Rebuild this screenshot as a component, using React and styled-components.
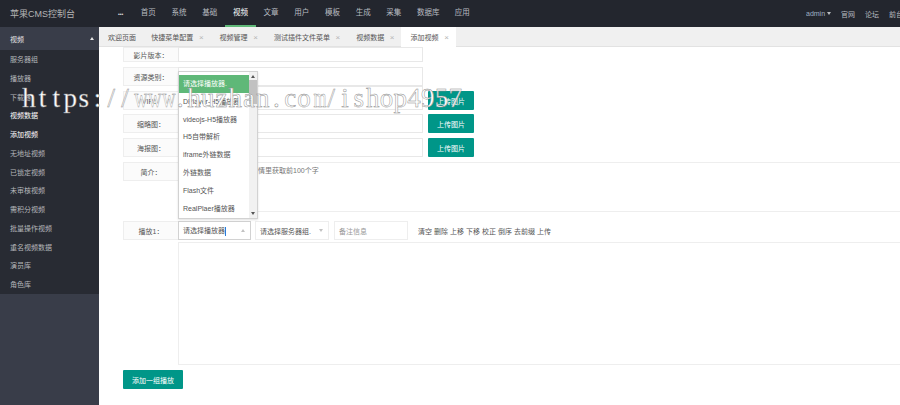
import styled, { createGlobalStyle } from "styled-components";

const GlobalStyle = createGlobalStyle`
  * { box-sizing: border-box; }
  html, body { margin: 0; padding: 0; background: #fff; }
  body { font-family: "Liberation Sans", "Noto Sans CJK SC", sans-serif; font-size: 7px; color: #555; }
`;

const Page = styled.div`
  position: relative;
  width: 900px;
  height: 405px;
  overflow: hidden;
`;

const TopBar = styled.div`
  height: 27px;
  background: #23262e;
  display: flex;
  align-items: center;
`;

const Logo = styled.div`
  width: 111px;
  padding-left: 10px;
  font-size: 9px;
  color: #b4b4b4;
`;

const NavMore = styled.div`
  width: 22px;
  padding-left: 7px;
  color: #ddd;
  font-size: 5px;
  font-weight: 700;
`;

const Nav = styled.div`
  display: flex;
  height: 27px;
`;

const NavItem = styled.div`
  width: ${(p) => p.$w || 30.7}px;
  height: 27px;
  line-height: 26px;
  text-align: center;
  font-size: 7.5px;
  color: ${(p) => (p.$active ? "#fff" : "#b8bcc0")};
  border-bottom: 2px solid ${(p) => (p.$active ? "#5fb878" : "transparent")};
`;

const UserArea = styled.div`
  margin-left: auto;
  display: flex;
  align-items: center;
  gap: 10px;
  width: 94px;
  flex-shrink: 0;
  white-space: nowrap;
  overflow: hidden;
  font-size: 7px;
  color: #b8bcc0;
`;

const AdminName = styled.span`
  color: #9fb0c4;
  display: inline-flex;
  align-items: center;
  gap: 2px;
  width: 25px;
`;

const Caret = styled.i`
  width: 0;
  height: 0;
  border-left: 2.5px solid transparent;
  border-right: 2.5px solid transparent;
  border-top: ${(p) => (p.$up ? "0" : "3px solid " + (p.$color || "#b8bcc0"))};
  border-bottom: ${(p) => (p.$up ? "3px solid " + (p.$color || "#b8bcc0") : "0")};
`;

const Body = styled.div`
  display: flex;
  height: 378px;
`;

const Sidebar = styled.div`
  width: 99px;
  flex-shrink: 0;
  background: #393d49;
`;

const SideHead = styled.div`
  height: 23px;
  padding: 0 5px 0 10px;
  display: flex;
  align-items: center;
  justify-content: space-between;
  color: #e4e4e4;
  font-size: 7px;
`;

const SideList = styled.div`
  background: #282b33;
  height: 244px;
  padding-top: 1px;
`;

const SideItem = styled.div`
  height: 18.75px;
  line-height: 18.75px;
  padding-left: 10px;
  font-size: 7px;
  color: ${(p) => (p.$active ? "#fff" : "#b4b6ba")};
`;

const Main = styled.div`
  flex: 1;
  min-width: 0;
`;

const Tabs = styled.div`
  height: 20px;
  background: #f0f0f0;
  border-bottom: 1px solid #e2e2e2;
  display: flex;
`;

const Tab = styled.div`
  display: flex;
  align-items: center;
  padding: 0 6.3px 0 9px;
  gap: 5px;
  height: 20px;
  font-size: 7px;
  color: #555;
  background: ${(p) => (p.$active ? "#fff" : "transparent")};
`;

const TabClose = styled.span`
  width: 6px;
  text-align: center;
  font-size: 8px;
  color: #b5b5b5;
`;

const Form = styled.div`
  padding-left: 24px;
`;

const Row = styled.div`
  display: flex;
  align-items: ${(p) => (p.$end ? "flex-end" : "flex-start")};
  height: ${(p) => p.$h}px;
  margin-top: ${(p) => p.$mt || 0}px;
`;

const Label = styled.div`
  width: 55px;
  flex-shrink: 0;
  height: 19px;
  max-height: 100%;
  display: flex;
  align-items: center;
  justify-content: center;
  background: #fbfbfb;
  border: 1px solid #eee;
  border-right: 0;
  font-size: 7px;
  color: #555;
`;

const LabelGap = styled.div`
  width: 55px;
  flex-shrink: 0;
`;

const TextBox = styled.div`
  width: 245px;
  height: 100%;
  flex-shrink: 0;
  background: #fff;
  border: 1px solid #e8e8e8;
`;

const WideBox = styled.div`
  flex: 1;
  height: 100%;
  background: #fff;
  border: 1px solid #eee;
  border-right: 0;
  padding: 2px;
  font-size: 7px;
  color: #777;
`;

const UploadButton = styled.div`
  width: 46px;
  height: 19px;
  margin-left: 5px;
  border-radius: 1px;
  background: #009688;
  color: #fff;
  font-size: 7px;
  display: flex;
  align-items: center;
  justify-content: center;
`;

const Select = styled.div`
  width: ${(p) => p.$w}px;
  height: 19px;
  margin-right: ${(p) => p.$mr}px;
  padding: 0 5px 0 4px;
  display: flex;
  align-items: center;
  justify-content: space-between;
  background: #fff;
  border: 1px solid ${(p) => (p.$open ? "#d2d2d2" : "#eee")};
  font-size: 7px;
  color: #555;
  white-space: nowrap;
`;

const TextCaret = styled.span`
  display: inline-block;
  width: 1px;
  height: 9px;
  vertical-align: middle;
  background: #2a7bd8;
`;

const NoteInput = styled(Select)`
  color: #999;
`;

const Actions = styled.div`
  display: flex;
  gap: 2px;
  margin-left: 10px;
  height: 19px;
  align-items: center;
  font-size: 7px;
  color: #555;
`;

const AddButton = styled.div`
  width: 60px;
  height: 19px;
  margin-top: 5px;
  border-radius: 1px;
  background: #009688;
  color: #fff;
  font-size: 7px;
  display: flex;
  align-items: center;
  justify-content: center;
`;

const Dropdown = styled.div`
  position: absolute;
  left: 178px;
  top: 71px;
  width: 80px;
  height: 148px;
  padding: 3px 8px 0 0;
  background: #fff;
  border: 1px solid #d2d2d2;
  box-shadow: 0 1px 2px rgba(0, 0, 0, 0.12);
`;

const Option = styled.div`
  height: 17.8px;
  line-height: 17.8px;
  padding-left: 4px;
  font-size: 7px;
  white-space: nowrap;
  color: ${(p) => (p.$selected ? "#fff" : "#555")};
  background: ${(p) => (p.$selected ? "#5fb878" : "transparent")};
`;

const Scrollbar = styled.div`
  position: absolute;
  right: 0;
  top: 0;
  bottom: 0;
  width: 8px;
  background: #f1f1f1;
  display: flex;
  flex-direction: column;
  align-items: center;
  justify-content: space-between;
  padding: 3px 0;
`;

const ScrollThumb = styled.div`
  position: absolute;
  left: 0;
  top: 8px;
  width: 8px;
  height: 24px;
  background: #c1c1c1;
`;

const Watermark = styled.div`
  position: absolute;
  left: 22px;
  top: 84px;
  display: flex;
  font-family: "Liberation Serif", serif;
  font-size: 27px;
  line-height: 28px;
  white-space: nowrap;
  color: #fff;
  -webkit-text-stroke: 0.45px #8a8a8a;
  pointer-events: none;
`;

const Glyph = styled.span`
  display: block;
  width: 13.75px;
  text-align: center;
  transform: scaleX(${(p) => p.$sx});
`;

const navs = [
  ["首页"], ["系统"], ["基础"], ["视频", true], ["文章"], ["用户"], ["模板"], ["生成"], ["采集"],
];

const sideItems = [
  ["服务器组"], ["播放器"], ["下载器"], ["视频数据", true], ["添加视频", true], ["无地址视频"],
  ["已锁定视频"], ["未审核视频"], ["需积分视频"], ["批量操作视频"], ["重名视频数据"], ["演员库"], ["角色库"],
];

const options = [
  "DPlayer-H5播放器", "videojs-H5播放器", "H5自带解析", "iframe外链数据", "外链数据", "Flash文件", "RealPlaer播放器",
];

const actions = ["清空", "删除", "上移", "下移", "校正", "倒序", "去前缀", "上传"];

// 水印是等宽衬线字，宽字母要压窄
const squeeze = { w: 0.68, m: 0.62 };
const watermark = "https://www.huzhan.com/ishop4957";

export default function App() {
  return (
    <Page>
      <GlobalStyle />
      <TopBar>
        <Logo>苹果CMS控制台</Logo>
        <NavMore>•••</NavMore>
        <Nav>
          {navs.map(([name, active]) => (
            <NavItem key={name} $active={active}>{name}</NavItem>
          ))}
          <NavItem $w={38}>数据库</NavItem>
          <NavItem $w={30}>应用</NavItem>
        </Nav>
        <UserArea>
          <AdminName>admin <Caret /></AdminName>
          <span>官网</span>
          <span>论坛</span>
          <span>前台</span>
        </UserArea>
      </TopBar>

      <Body>
        <Sidebar>
          <SideHead>视频<Caret $up $color="#e4e4e4" /></SideHead>
          <SideList>
            {sideItems.map(([name, active]) => (
              <SideItem key={name} $active={active}>{name}</SideItem>
            ))}
          </SideList>
        </Sidebar>

        <Main>
          <Tabs>
            <Tab>欢迎页面</Tab>
            <Tab>快捷菜单配置<TabClose>×</TabClose></Tab>
            <Tab>视频管理<TabClose>×</TabClose></Tab>
            <Tab>测试插件文件菜单<TabClose>×</TabClose></Tab>
            <Tab>视频数据<TabClose>×</TabClose></Tab>
            <Tab $active>添加视频<TabClose>×</TabClose></Tab>
          </Tabs>

          <Form>
            <Row $h={15}>
              <Label>影片版本：</Label>
              <TextBox />
            </Row>
            <Row $h={19} $mt={5}>
              <Label>资源类别：</Label>
              <TextBox />
            </Row>
            <Row $h={24} $end>
              <Label>VIP：</Label>
              <TextBox />
              <UploadButton>上传图片</UploadButton>
            </Row>
            <Row $h={19} $mt={4}>
              <Label>缩略图：</Label>
              <TextBox />
              <UploadButton>上传图片</UploadButton>
            </Row>
            <Row $h={19} $mt={5}>
              <Label>海报图：</Label>
              <TextBox />
              <UploadButton>上传图片</UploadButton>
            </Row>
            <Row $h={50} $mt={5}>
              <Label>简介：</Label>
              <WideBox>不填写将自动从第一页详情里获取前100个字</WideBox>
            </Row>
            <Row $h={19} $mt={9}>
              <Label>播放1：</Label>
              <Select $w={73} $mr={4} $open>
                <span>请选择播放器<TextCaret /></span>
                <Caret $up $color="#c2c2c2" />
              </Select>
              <Select $w={74} $mr={5}>
                请选择服务器组.
                <Caret $color="#c2c2c2" />
              </Select>
              <NoteInput $w={74} $mr={0}>备注信息</NoteInput>
              <Actions>
                {actions.map((a) => (
                  <span key={a}>{a}</span>
                ))}
              </Actions>
            </Row>
            <Row $h={123} $mt={2}>
              <LabelGap />
              <WideBox />
            </Row>
            <AddButton>添加一组播放</AddButton>
          </Form>
        </Main>
      </Body>

      <Dropdown>
        <Option $selected>请选择播放器.</Option>
        {options.map((o) => (
          <Option key={o}>{o}</Option>
        ))}
        <Scrollbar>
          <Caret $up $color="#555" />
          <ScrollThumb />
          <Caret $color="#555" />
        </Scrollbar>
      </Dropdown>

      <Watermark>
        {watermark.split("").map((c, i) => (
          <Glyph key={i} $sx={squeeze[c] || 1}>{c}</Glyph>
        ))}
      </Watermark>
    </Page>
  );
}
